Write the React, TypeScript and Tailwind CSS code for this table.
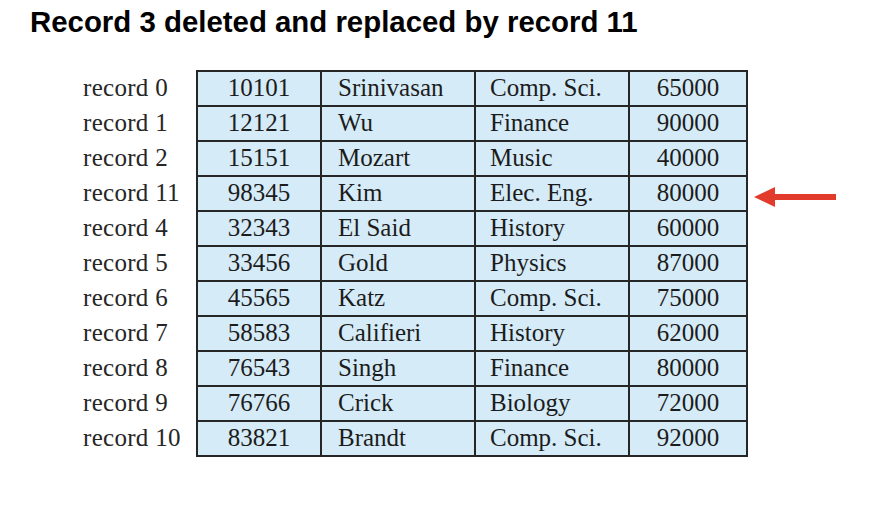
const rows = [
  { label: 'record 0', id: '10101', name: 'Srinivasan', dept: 'Comp. Sci.', salary: '65000' },
  { label: 'record 1', id: '12121', name: 'Wu', dept: 'Finance', salary: '90000' },
  { label: 'record 2', id: '15151', name: 'Mozart', dept: 'Music', salary: '40000' },
  { label: 'record 11', id: '98345', name: 'Kim', dept: 'Elec. Eng.', salary: '80000' },
  { label: 'record 4', id: '32343', name: 'El Said', dept: 'History', salary: '60000' },
  { label: 'record 5', id: '33456', name: 'Gold', dept: 'Physics', salary: '87000' },
  { label: 'record 6', id: '45565', name: 'Katz', dept: 'Comp. Sci.', salary: '75000' },
  { label: 'record 7', id: '58583', name: 'Califieri', dept: 'History', salary: '62000' },
  { label: 'record 8', id: '76543', name: 'Singh', dept: 'Finance', salary: '80000' },
  { label: 'record 9', id: '76766', name: 'Crick', dept: 'Biology', salary: '72000' },
  { label: 'record 10', id: '83821', name: 'Brandt', dept: 'Comp. Sci.', salary: '92000' },
];

function Arrow() {
  return (
    <svg width="82" height="20" viewBox="0 0 82 20" className="block">
      <polygon points="0,10 21,0 21,7 82,7 82,13 21,13 21,20" fill="#e23b2b" />
    </svg>
  );
}

export default function App() {
  return (
    <div className="h-[506px] w-full overflow-hidden bg-white">
      <h1 className="pl-[30px] pt-[5px] font-['Liberation_Sans',Arial,sans-serif] text-[29.4px] font-bold leading-[34px] text-black">
        Record 3 deleted and replaced by record 11
      </h1>

      <div className="mt-[31px] flex pl-[83px] font-['Liberation_Serif','Times_New_Roman',serif] text-[25px] leading-none text-[#1c1c1c]">
        {/* Row labels */}
        <div className="flex w-[113px] flex-col pt-[2px]">
          {rows.map((r) => (
            <div
              key={r.label}
              className="flex h-[35px] items-center pb-[4px] tracking-[0.3px] text-[#262626]"
            >
              {r.label}
            </div>
          ))}
        </div>

        {/* Table */}
        <div className="w-[552px] border-x-2 border-t-2 border-[#262626] bg-[#d5ebf7]">
          {rows.map((r) => (
            <div
              key={r.label}
              className="grid h-[35px] grid-cols-[124px_154px_154px_116px] border-b-2 border-[#262626]"
            >
              <div className="flex items-center justify-center border-r-2 border-[#262626] pb-[2px]">{r.id}</div>
              <div className="flex items-center border-r-2 border-[#262626] pb-[2px] pl-[16px]">{r.name}</div>
              <div className="flex items-center border-r-2 border-[#262626] pb-[2px] pl-[14px]">{r.dept}</div>
              <div className="flex items-center justify-center pb-[2px]">{r.salary}</div>
            </div>
          ))}
        </div>

        <div className="ml-[6px] mt-[117px] self-start">
          <Arrow />
        </div>
      </div>
    </div>
  );
}
